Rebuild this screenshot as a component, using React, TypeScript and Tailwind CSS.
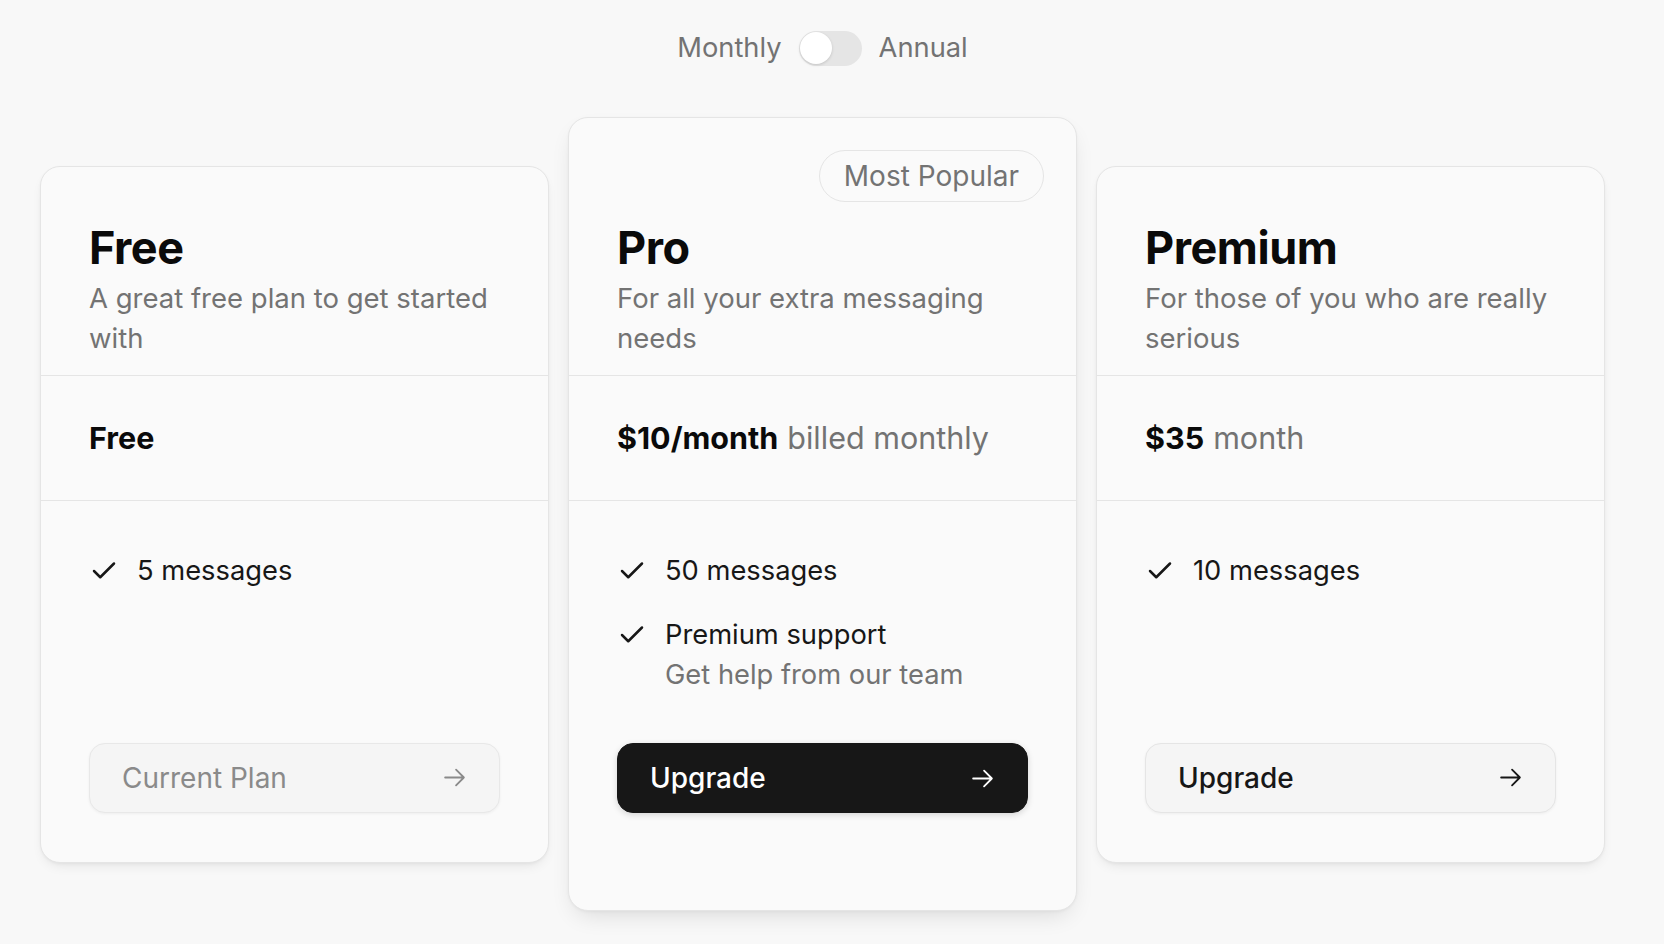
import React from "react";
import { Check } from "lucide-react";

function Arrow({ className }: { className?: string }) {
  return (
    <svg
      viewBox="0 0 24 24"
      fill="none"
      stroke="currentColor"
      strokeWidth={1.75}
      strokeLinecap="round"
      strokeLinejoin="round"
      className={className}
    >
      <path d="M13.5 4.5 21 12m0 0-7.5 7.5M21 12H3" />
    </svg>
  );
}

type Feature = { title: string; sub?: string };

function FeatureItem({ f }: { f: Feature }) {
  return (
    <li className="flex items-start gap-[18px]">
      <div className="flex h-[40px] items-center">
        <Check size={30} strokeWidth={2} className="text-[#171717]" />
      </div>
      <div className="flex flex-col">
        <span className="text-[27.3px] leading-[40px] text-[#171717]">{f.title}</span>
        {f.sub && <span className="text-[27.3px] leading-[40px] text-[#737373]">{f.sub}</span>}
      </div>
    </li>
  );
}

export default function App() {
  return (
    <div className="min-h-[944px] w-full bg-[#f8f8f8] font-['Inter','Noto_Sans',sans-serif]">
      <div className="w-[1645px] px-10 pt-[28px]">
        {/* toggle */}
        <div className="flex h-[40px] items-center justify-center gap-[17px]">
          <span className="text-[27.3px] leading-[40px] text-[#737373]">Monthly</span>
          <div className="flex h-[35px] w-[63px] items-center rounded-full bg-[#e5e5e5] p-[1.5px]">
            <div className="h-[32px] w-[32px] rounded-full bg-white shadow-[0_1px_3px_rgba(0,0,0,0.15)]" />
          </div>
          <span className="text-[27.3px] leading-[40px] text-[#737373]">Annual</span>
        </div>

        {/* cards */}
        <div className="mt-[49px] grid grid-cols-3 items-center gap-[19px]">
          {/* Free */}
          <div className="flex h-[697px] flex-col rounded-[20px] border border-[#e5e5e5] bg-[#fafafa] shadow-[0_6px_14px_-6px_rgba(0,0,0,0.12),0_1px_3px_rgba(0,0,0,0.04)]">
            <div className="border-b border-[#e5e5e5] px-12 pt-[53px] pb-[17px]">
              <h2 className="text-[45px] leading-[56px] font-bold tracking-[-0.01em] text-[#0a0a0a]">Free</h2>
              <p className="mt-[2px] text-[27.5px] leading-[40px] text-[#737373]">
                A great free plan to get started with
              </p>
            </div>
            <div className="flex h-[125px] items-center border-b border-[#e5e5e5] px-12">
              <span className="text-[30.5px] leading-[40px] font-bold text-[#0a0a0a]">Free</span>
            </div>
            <div className="flex flex-1 flex-col px-12 pt-[50px] pb-[49px]">
              <ul className="flex flex-col gap-6">
                <FeatureItem f={{ title: "5 messages" }} />
              </ul>
              <button className="mt-auto flex h-[70px] w-full items-center justify-between rounded-[16px] border border-[#e8e8e8] bg-[#f5f5f5] px-8 text-[28px] leading-[40px] text-[#8a8a8a] shadow-[0_1px_3px_rgba(0,0,0,0.05)]">
                <span>Current Plan</span>
                <Arrow className="h-[25px] w-[25px]" />
              </button>
            </div>
          </div>

          {/* Pro */}
          <div className="flex h-[794px] flex-col rounded-[20px] border border-[#e5e5e5] bg-[#fafafa] shadow-[0_10px_24px_-8px_rgba(0,0,0,0.14),0_1px_3px_rgba(0,0,0,0.04)]">
            <div className="border-b border-[#e5e5e5] px-12 pt-[32px] pb-[17px]">
              <div className="-mr-4 flex justify-end">
                <span className="rounded-full border border-[#e5e5e5] px-[24px] py-[5px] text-[28px] leading-[40px] text-[#737373]">
                  Most Popular
                </span>
              </div>
              <h2 className="mt-[18px] text-[45px] leading-[56px] font-bold tracking-[-0.01em] text-[#0a0a0a]">Pro</h2>
              <p className="mt-[2px] text-[27.5px] leading-[40px] text-[#737373]">
                For all your extra messaging needs
              </p>
            </div>
            <div className="flex h-[125px] items-center border-b border-[#e5e5e5] px-12">
              <span className="text-[30.5px] leading-[40px] font-bold text-[#0a0a0a]">$10/month</span>
              <span className="ml-[9px] text-[30.5px] leading-[40px] text-[#737373]">billed monthly</span>
            </div>
            <div className="flex flex-1 flex-col px-12 pt-[50px] pb-[97px]">
              <ul className="flex flex-col gap-6">
                <FeatureItem f={{ title: "50 messages" }} />
                <FeatureItem f={{ title: "Premium support", sub: "Get help from our team" }} />
              </ul>
              <button className="mt-auto flex h-[70px] w-full items-center justify-between rounded-[16px] border border-[#171717] bg-[#171717] px-8 text-[28px] leading-[40px] font-medium text-white shadow-[0_2px_6px_rgba(0,0,0,0.15)]">
                <span>Upgrade</span>
                <Arrow className="h-[25px] w-[25px]" />
              </button>
            </div>
          </div>

          {/* Premium */}
          <div className="flex h-[697px] flex-col rounded-[20px] border border-[#e5e5e5] bg-[#fafafa] shadow-[0_6px_14px_-6px_rgba(0,0,0,0.12),0_1px_3px_rgba(0,0,0,0.04)]">
            <div className="border-b border-[#e5e5e5] px-12 pt-[53px] pb-[17px]">
              <h2 className="text-[45px] leading-[56px] font-bold tracking-[-0.01em] text-[#0a0a0a]">Premium</h2>
              <p className="mt-[2px] text-[27.5px] leading-[40px] text-[#737373]">
                For those of you who are really serious
              </p>
            </div>
            <div className="flex h-[125px] items-center border-b border-[#e5e5e5] px-12">
              <span className="text-[30.5px] leading-[40px] font-bold text-[#0a0a0a]">$35</span>
              <span className="ml-[9px] text-[30.5px] leading-[40px] text-[#737373]">month</span>
            </div>
            <div className="flex flex-1 flex-col px-12 pt-[50px] pb-[49px]">
              <ul className="flex flex-col gap-6">
                <FeatureItem f={{ title: "10 messages" }} />
              </ul>
              <button className="mt-auto flex h-[70px] w-full items-center justify-between rounded-[16px] border border-[#e5e5e5] bg-[#f5f5f5] px-8 text-[28px] leading-[40px] font-medium text-[#171717] shadow-[0_1px_3px_rgba(0,0,0,0.05)]">
                <span>Upgrade</span>
                <Arrow className="h-[25px] w-[25px]" />
              </button>
            </div>
          </div>
        </div>
      </div>
    </div>
  );
}
